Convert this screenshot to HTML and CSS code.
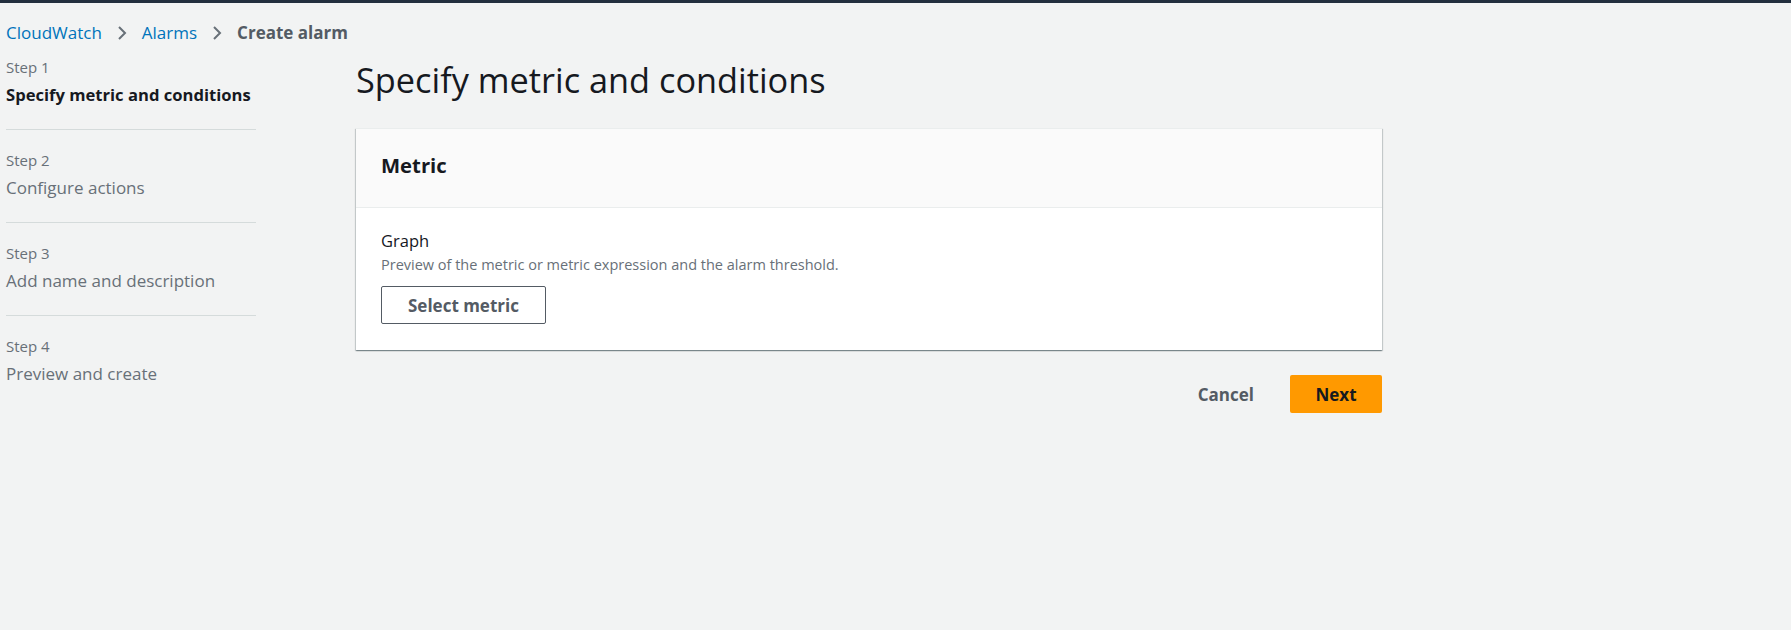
FILE: index.html
```html
<!DOCTYPE html>
<html lang="en">
<head>
<meta charset="utf-8">
<title>Create alarm</title>
<link rel="stylesheet" href="styles.css">
</head>
<body>
<div class="topbar"></div>
<nav class="breadcrumb">
  <a class="crumb-link" href="#">CloudWatch</a>
  <svg class="chev" width="12" height="16" viewBox="0 0 12 16"><path d="M3 2l6 6-6 6" fill="none" stroke="#687078" stroke-width="2"/></svg>
  <a class="crumb-link" href="#">Alarms</a>
  <svg class="chev" width="12" height="16" viewBox="0 0 12 16"><path d="M3 2l6 6-6 6" fill="none" stroke="#687078" stroke-width="2"/></svg>
  <span class="crumb-current">Create alarm</span>
</nav>
<div class="layout">
  <aside class="steps">
    <div class="step">
      <div class="step-label">Step 1</div>
      <div class="step-title active">Specify metric and conditions</div>
    </div>
    <div class="step">
      <div class="step-label">Step 2</div>
      <div class="step-title">Configure actions</div>
    </div>
    <div class="step">
      <div class="step-label">Step 3</div>
      <div class="step-title">Add name and description</div>
    </div>
    <div class="step last">
      <div class="step-label">Step 4</div>
      <div class="step-title">Preview and create</div>
    </div>
  </aside>
  <main class="main">
    <h1 class="page-title">Specify metric and conditions</h1>
    <section class="card">
      <div class="card-header"><h2>Metric</h2></div>
      <div class="card-body">
        <div class="field-label">Graph</div>
        <div class="field-desc">Preview of the metric or metric expression and the alarm threshold.</div>
        <button class="btn-normal">Select metric</button>
      </div>
    </section>
    <div class="actions">
      <button class="btn-link">Cancel</button>
      <button class="btn-primary">Next</button>
    </div>
  </main>
</div>
</body>
</html>
```
FILE: styles.css
```css
* { box-sizing: border-box; }
body {
  margin: 0;
  background: #f2f3f3;
  font-family: "Open Sans", "Noto Sans", sans-serif;
  color: #16191f;
}
.topbar { height: 3px; background: #232f3e; }
.breadcrumb {
  display: flex;
  align-items: center;
  gap: 14px;
  padding: 17px 0 0 6px;
  height: 43px;
  font-size: 17px;
  line-height: 22px;
}
.crumb-link { color: #0073bb; text-decoration: none; }
.crumb-current { color: #545b64; font-weight: 700; }
.chev { display: block; }
.layout { display: flex; padding-top: 11px; }
.steps { width: 250px; margin-left: 6px; flex: none; }
.step {
  padding: 20px 0 22px;
  border-bottom: 1px solid #d5dbdb;
}
.step:first-child { padding-top: 0; }
.step.last { border-bottom: none; }
.step-label { font-size: 15px; line-height: 20px; color: #687078; margin-bottom: 6px; }
.step-title { font-size: 17px; line-height: 24px; color: #687078; white-space: nowrap; }
.step-title.active { color: #16191f; font-weight: 700; font-size: 16.6px; }
.main { margin-left: 100px; width: 1026px; flex: none; }
.page-title {
  margin: 3px 0 28px;
  font-size: 34.3px;
  line-height: 40px;
  font-weight: 400;
  color: #16191f;
}
.card {
  background: #fff;
  box-shadow: 0 1px 1px 0 rgba(0,28,36,.3), 1px 1px 1px 0 rgba(0,28,36,.15), -1px 1px 1px 0 rgba(0,28,36,.15);
  border-top: 1px solid #eaeded;
}
.card-header {
  background: #fafafa;
  border-bottom: 1px solid #eaeded;
  padding: 23px 25px 29px;
}
.card-header h2 { margin: 0; font-size: 20.3px; line-height: 26px; font-weight: 700; }
.card-body { padding: 22px 25px 26px; }
.field-label { font-size: 16.5px; line-height: 22px; }
.field-desc { font-size: 14.5px; line-height: 18px; color: #687078; margin-top: 4px; }
.btn-normal {
  margin-top: 12px;
  height: 38px;
  padding: 0 26px;
  background: #fff;
  border: 1px solid #545b64;
  border-radius: 2px;
  color: #545b64;
  font-family: inherit;
  font-size: 17px;
  font-weight: 700;
}
.actions {
  display: flex;
  justify-content: flex-end;
  align-items: center;
  gap: 16px;
  margin-top: 25px;
}
.btn-link {
  background: none;
  border: none;
  padding: 0 20px;
  height: 38px;
  font-family: inherit;
  font-size: 17px;
  font-weight: 700;
  color: #545b64;
}
.btn-primary {
  height: 38px;
  width: 92px;
  background: #ff9900;
  border: none;
  border-radius: 2px;
  font-family: inherit;
  font-size: 17px;
  font-weight: 700;
  color: #16191f;
}
```
